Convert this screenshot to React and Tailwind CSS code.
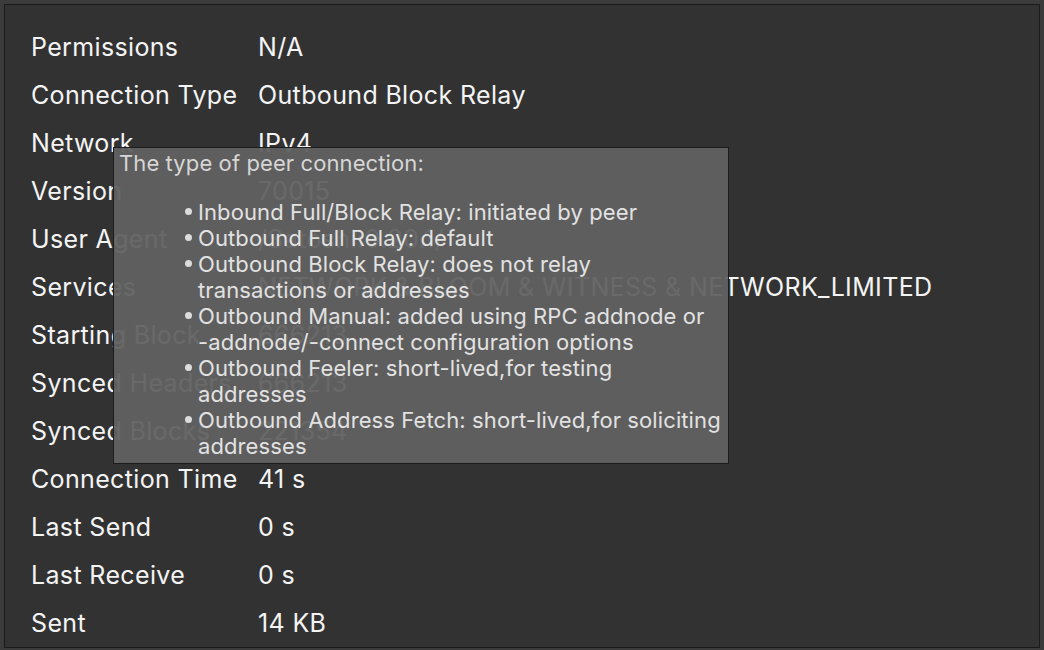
const rows = [
  ["Permissions", "N/A"],
  ["Connection Type", "Outbound Block Relay"],
  ["Network", "IPv4"],
  ["Version", "70015"],
  ["User Agent", "/Satoshi:0.20.1/"],
  ["Services", "NETWORK & BLOOM & WITNESS & NETWORK_LIMITED"],
  ["Starting Block", "666213"],
  ["Synced Headers", "666213"],
  ["Synced Blocks", "221354"],
  ["Connection Time", "41 s"],
  ["Last Send", "0 s"],
  ["Last Receive", "0 s"],
  ["Sent", "14 KB"],
];

const tips = [
  ["Inbound Full/Block Relay: initiated by peer"],
  ["Outbound Full Relay: default"],
  ["Outbound Block Relay: does not relay", "transactions or addresses"],
  ["Outbound Manual: added using RPC addnode or", "-addnode/-connect configuration options"],
  ["Outbound Feeler: short-lived,for testing", "addresses"],
  ["Outbound Address Fetch: short-lived,for soliciting", "addresses"],
];

function Tooltip() {
  return (
    <div className="absolute left-[108px] top-[142px] w-[616px] h-[317px] border border-[#1c1c1c] bg-[#616161]/95 pl-[5px] pt-[2px] text-[22px] leading-[26px] tracking-[0.1px] text-[#e2e2e2]">
      <div className="text-[#d6d6d6]">The type of peer connection:</div>
      <ul className="mt-[23px] pl-[79px]">
        {tips.map((lines, i) => (
          <li key={i} className="relative whitespace-nowrap">
            <span className="absolute left-[-13px] top-[9px] h-[7px] w-[7px] rounded-full bg-[#dcdcdc]" />
            {lines.map((l, j) => (
              <div key={j}>{l}</div>
            ))}
          </li>
        ))}
      </ul>
    </div>
  );
}

export default function App() {
  return (
    <div
      className="w-[1044px] h-[650px] bg-[#3b3b3b] p-1"
      style={{ fontFamily: "Inter, 'Liberation Sans', sans-serif" }}
    >
      <div className="relative h-[644px] border border-[#1b1b1b] bg-[#323232] pl-[26px] pt-[19px]">
        {rows.map(([label, value]) => (
          <div key={label} className="flex h-[48px] items-center text-[25px] tracking-[0.35px] text-[#f4f4f4]">
            <div className="w-[227px] shrink-0">{label}</div>
            <div className="whitespace-nowrap">{value}</div>
          </div>
        ))}
        <Tooltip />
      </div>
    </div>
  );
}
